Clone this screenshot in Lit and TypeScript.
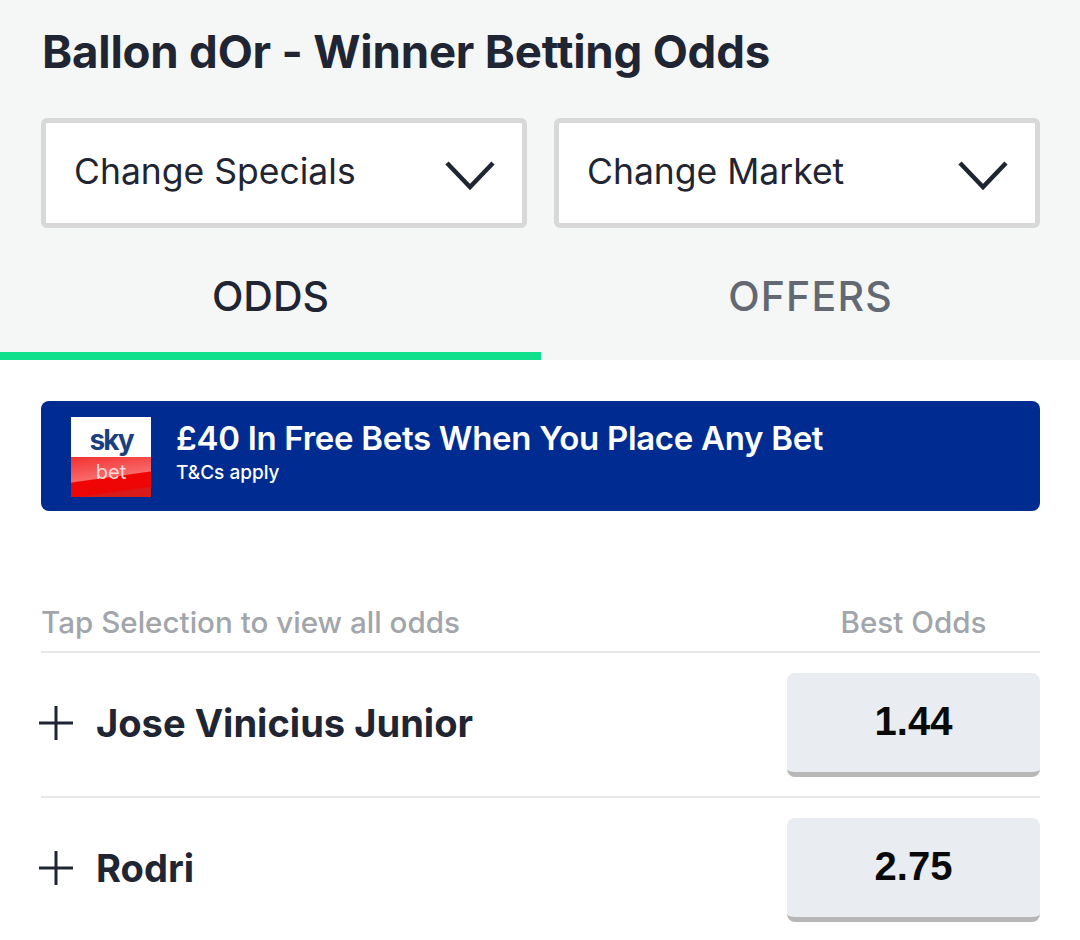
import { LitElement, html, css } from "lit";
import { customElement } from "lit/decorators.js";

const chevron = html`<svg class="chev" width="50" height="32" viewBox="0 0 50 32"><path d="M2 4 L25 28 L48 4" fill="none" stroke="#1f2532" stroke-width="4.5"/></svg>`;
const plus = html`<svg class="plus" width="36" height="36" viewBox="0 0 36 36"><path d="M18 1V35M1 18H35" fill="none" stroke="#1f2532" stroke-width="3"/></svg>`;

@customElement("app-root")
export class AppRoot extends LitElement {
  static styles = css`
    :host { display: block; width: 1080px; height: 940px; overflow: hidden; background: #fff; font-family: Inter, "Noto Sans", sans-serif; color: #1f2532; }
    .head { background: #f5f7f7; height: 360px; display: flex; flex-direction: column; }
    h1 { margin: 0; height: 118px; padding: 24px 0 0 42px; box-sizing: border-box; font-size: 45.6px; line-height: 56px; font-weight: 650; letter-spacing: -0.2px; white-space: nowrap; }
    .selects { display: flex; gap: 27px; padding: 0 40px 0 41px; }
    .select { flex: 1; height: 110px; box-sizing: border-box; border: 5px solid #d8d8d8; border-radius: 6px; background: #fff; display: flex; align-items: center; justify-content: space-between; padding: 0 27px 4px 28px; font-size: 35.5px; }
    .chev { display: block; margin-top: 7px; }
    .tabs { display: flex; flex: 1; }
    .tab { flex: 1; display: flex; align-items: center; justify-content: center; font-size: 41px; font-weight: 500; color: #626973; border-bottom: 8px solid transparent; padding-top: 12px; box-sizing: border-box; }
    .tab.off { letter-spacing: 1.2px; }
    .tab.on { flex: 0 0 541px; color: #1f2532; border-bottom-color: #10e08c; }
    .banner { margin: 41px 40px 0 41px; height: 110px; border-radius: 8px; background: #002b91; display: flex; align-items: center; gap: 25px; padding-left: 30px; color: #fff; }
    .logo { width: 80px; height: 80px; margin-top: 1px; display: flex; flex-direction: column; flex: none; }
    .sky { height: 40px; background: #fff; color: #1c3f7f; font-weight: 700; font-size: 28px; letter-spacing: -2px; line-height: 46px; text-align: center; overflow: hidden; }
    .bet { height: 40px; background: linear-gradient(172deg, #f43030 0, #f86a6a 49%, #f00505 51%, #ee0505 78%, #d81a1a 82%, #d81a1a 100%); color: #ffd8d8; font-size: 20px; line-height: 30px; text-align: center; }
    .copy { margin-top: -7px; }
    .offer { font-size: 33px; font-weight: 600; line-height: 40px; letter-spacing: -0.3px; white-space: nowrap; }
    .tc { font-size: 19px; font-weight: 500; line-height: 29px; }
    .list { margin: 89px 40px 0 41px; }
    .cols { display: flex; height: 53px; box-sizing: border-box; padding-top: 4px; border-bottom: 2px solid #e8e8e8; color: #a2a5aa; font-size: 29.6px; font-weight: 500; }
    .cols span:first-child { flex: 1; }
    .cols span:last-child { width: 253px; text-align: center; }
    .row { display: flex; align-items: center; height: 145px; box-sizing: border-box; border-bottom: 2px solid #e8e8e8; }
    .plus { margin: -4px 0 0 -3px; flex: none; }
    .name { flex: 1; margin: -4px 0 0 22px; font-size: 38.1px; font-weight: 650; }
    .odds { width: 253px; height: 104px; box-sizing: border-box; background: #e9ecf0; border-bottom: 5px solid #b7b7b7; border-radius: 8px; display: flex; align-items: center; justify-content: center; padding-bottom: 2px; font-family: "Liberation Sans", Arial, sans-serif; font-weight: 700; font-size: 40px; color: #0a0a0a; }
  `;

  render() {
    const rows = [["Jose Vinicius Junior", "1.44"], ["Rodri", "2.75"]];
    return html`
      <div class="head">
        <h1>Ballon dOr - Winner Betting Odds</h1>
        <div class="selects">
          <div class="select">Change Specials ${chevron}</div>
          <div class="select">Change Market ${chevron}</div>
        </div>
        <div class="tabs">
          <div class="tab on">ODDS</div>
          <div class="tab off">OFFERS</div>
        </div>
      </div>
      <div class="banner">
        <div class="logo"><div class="sky">sky</div><div class="bet">bet</div></div>
        <div class="copy">
          <div class="offer">£40 In Free Bets When You Place Any Bet</div>
          <div class="tc">T&amp;Cs apply</div>
        </div>
      </div>
      <div class="list">
        <div class="cols"><span>Tap Selection to view all odds</span><span>Best Odds</span></div>
        ${rows.map(([n, o]) => html`<div class="row">${plus}<div class="name">${n}</div><div class="odds">${o}</div></div>`)}
      </div>
    `;
  }
}
